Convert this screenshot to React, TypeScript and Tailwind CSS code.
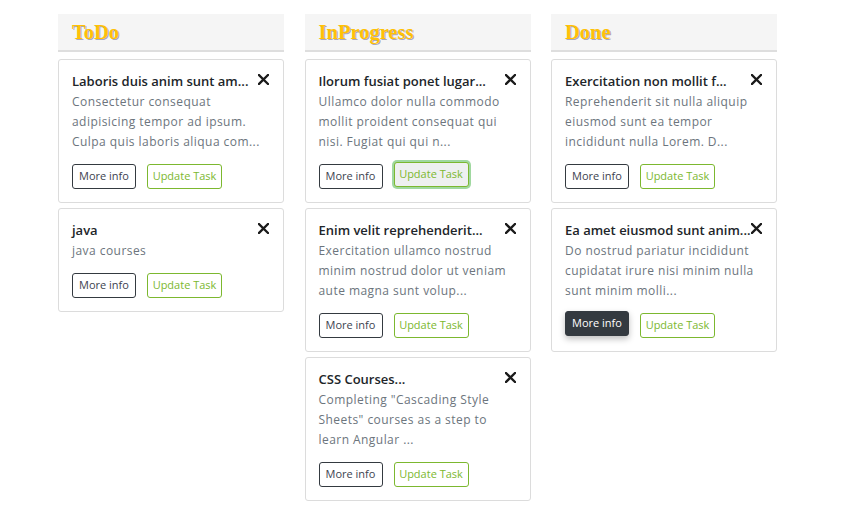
import React from "react";

type Task = { title: string; desc: string; hover?: "update" | "more" };

const columns: { name: string; tasks: Task[] }[] = [
  {
    name: "ToDo",
    tasks: [
      { title: "Laboris duis anim sunt am...", desc: "Consectetur consequat adipisicing tempor ad ipsum. Culpa quis laboris aliqua com..." },
      { title: "java", desc: "java courses" },
    ],
  },
  {
    name: "InProgress",
    tasks: [
      { title: "Ilorum fusiat ponet lugar...", desc: "Ullamco dolor nulla commodo mollit proident consequat qui nisi. Fugiat qui qui n...", hover: "update" },
      { title: "Enim velit reprehenderit...", desc: "Exercitation ullamco nostrud minim nostrud dolor ut veniam aute magna sunt volup..." },
      { title: "CSS Courses...", desc: "Completing \"Cascading Style Sheets\" courses as a step to learn Angular ..." },
    ],
  },
  {
    name: "Done",
    tasks: [
      { title: "Exercitation non mollit f...", desc: "Reprehenderit sit nulla aliquip eiusmod sunt ea tempor incididunt nulla Lorem. D..." },
      { title: "Ea amet eiusmod sunt anim...", desc: "Do nostrud pariatur incididunt cupidatat irure nisi minim nulla sunt minim molli...", hover: "more" },
    ],
  },
];

function CloseIcon() {
  return (
    <svg width="11" height="11" viewBox="0 0 11 11" className="block">
      <path d="M1 1 L10 10 M10 1 L1 10" stroke="#1a1a1a" strokeWidth="2.3" strokeLinecap="square" />
    </svg>
  );
}

function Card({ t }: { t: Task }) {
  const moreHover = t.hover === "more";
  const updHover = t.hover === "update";
  return (
    <div className="relative rounded-[3px] border border-[#dcdcdc] bg-white px-[13px] pt-[11px] pb-[13px]">
      <div className="absolute right-[14px] top-[14px]">
        <CloseIcon />
      </div>
      <div className="whitespace-nowrap text-[13px] font-semibold leading-[21px] text-[#212529]">{t.title}</div>
      <div className="pr-[8px] text-[12px] leading-[20px] tracking-[0.45px] text-[#6c757d]">{t.desc}</div>
      <div className="mt-[12px] flex items-start gap-[11px] text-[11px]">
        <button
          className={
            moreHover
              ? "relative top-[-2px] h-[25px] w-[64px] rounded-[3px] border border-[#343a40] bg-[#343a40] text-white shadow-[0_3px_6px_rgba(0,0,0,0.25)]"
              : "h-[25px] w-[64px] rounded-[3px] border border-[#343a40] bg-white text-[#3d4350]"
          }
        >
          More info
        </button>
        <button
          className={
            updHover
              ? "relative top-[-2px] h-[25px] w-[75px] rounded-[3px] border border-[#7cb82f] bg-[#eef0f0] text-[#7cb82f] shadow-[0_0_0_2px_rgba(120,200,120,0.7)]"
              : "h-[25px] w-[75px] rounded-[3px] border border-[#7cb82f] bg-white text-[#7cb82f]"
          }
        >
          Update Task
        </button>
      </div>
    </div>
  );
}

export default function App() {
  return (
    <div className="min-h-[521px] bg-white pl-[58px] pt-[14px] font-['Open_Sans',sans-serif]">
      <div className="flex gap-[20.5px]">
        {columns.map((c) => (
          <div key={c.name} className="w-[226px] shrink-0">
            <div className="flex h-[38px] items-center border-b-2 border-[#dedede] bg-[#f5f5f5] px-[14px]">
              <span className="font-['Liberation_Serif',serif] text-[20.5px] font-bold text-[#ffc107] [text-shadow:1px_1px_0_rgba(70,70,120,0.45)]">
                {c.name}
              </span>
            </div>
            <div className="mt-[7px] flex flex-col gap-[5px]">
              {c.tasks.map((t, i) => (
                <Card key={i} t={t} />
              ))}
            </div>
          </div>
        ))}
      </div>
    </div>
  );
}
